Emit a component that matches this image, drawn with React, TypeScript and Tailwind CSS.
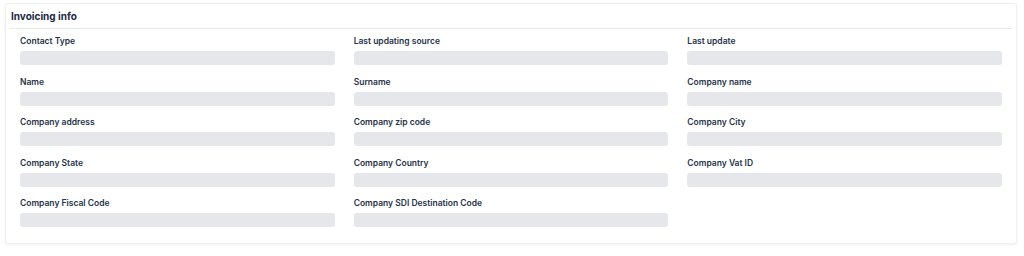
import React from 'react';

const FIELDS = [
  'Contact Type',
  'Last updating source',
  'Last update',
  'Name',
  'Surname',
  'Company name',
  'Company address',
  'Company zip code',
  'Company City',
  'Company State',
  'Company Country',
  'Company Vat ID',
  'Company Fiscal Code',
  'Company SDI Destination Code',
];

const Field = ({ label }: { label: string }) => (
  <div className="flex flex-col">
    <label className="font-['Inter',sans-serif] text-[8.5px] font-semibold leading-[12px] text-[#263248]">{label}</label>
    <div className="mt-[4px] h-[14px] rounded-[3px] bg-[#e6e7ea]" />
  </div>
);

export default function App() {
  return (
    <div className="min-h-[256px] bg-white pl-[5px] pr-[7px] pt-[3px]" style={{ fontFamily: '"Liberation Sans", Arial, sans-serif' }}>
      <section className="rounded-[3px] border border-[#eef0f2] bg-white pb-[16px] shadow-[0_1px_3px_rgba(0,0,0,0.06)]">
        {/* Header */}
        <div className="px-[4px]">
          <div className="border-b border-[#e6e8eb] pb-[5px] pl-[1px] pt-[6px]">
            <h2 className="font-['Inter',sans-serif] text-[10px] font-bold leading-[13px] text-[#1c2943]">Invoicing info</h2>
          </div>
        </div>

        {/* Fields */}
        <div className="grid grid-cols-3 gap-x-[19px] gap-y-[10.5px] px-[14px] pt-[6px]">
          {FIELDS.map((f) => (
            <Field key={f} label={f} />
          ))}
        </div>
      </section>
    </div>
  );
}
